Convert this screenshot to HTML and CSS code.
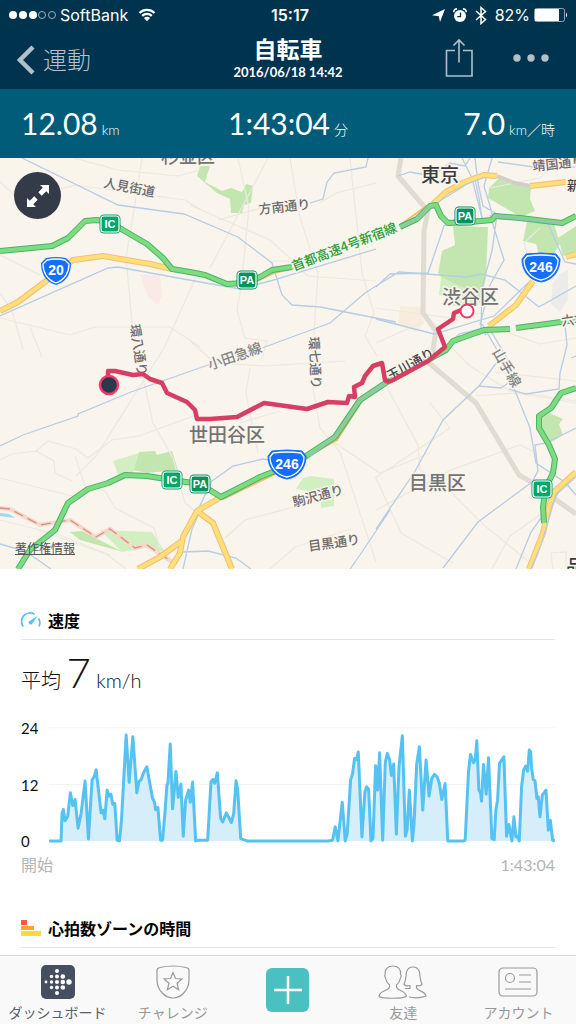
FILE: index.html
```html
<!DOCTYPE html>
<html lang="ja">
<head>
    <meta charset="UTF-8">
    <meta name="viewport" content="width=device-width, initial-scale=1.0">
    <title>自転車</title>
    <link rel="stylesheet" href="styles.css">
</head>
<body>
    <header>
        <div class="status-bar">
            <div class="status-left">
                <svg width="48" height="10" viewBox="0 0 48 10">
                    <g fill="#fff"><circle cx="5" cy="5" r="4"/><circle cx="15" cy="5" r="4"/><circle cx="25" cy="5" r="4"/></g>
                    <g fill="none" stroke="#9fb0bc"><circle cx="34" cy="5" r="3.5"/><circle cx="44" cy="5" r="3.5"/></g>
                </svg>
                <span class="carrier">SoftBank</span>
                <svg width="18" height="14" viewBox="0 0 18 14">
                    <path d="M1.500 5a10.600 10.600 0 0 1 15 0M4.200 7.900a6.800 6.800 0 0 1 9.600 0" fill="none" stroke="#fff" stroke-width="2.200"/>
                    <path d="M9 13.300 5.900 10.100a4.400 4.400 0 0 1 6.200 0z" fill="#fff"/>
                </svg>
            </div>
            <span class="clock">15:17</span>
            <div class="status-right">
                <svg width="13" height="13" viewBox="0 0 13 13"><path d="M13 0 8 13 6.800 7.200 0 6.200z" fill="#fff"/></svg>
                <svg width="14" height="15" viewBox="0 0 14 15">
                    <circle cx="7" cy="8" r="6" fill="#fff"/>
                    <path d="M.8 4.200A3 3 0 0 1 4 .9M13.200 4.200A3 3 0 0 0 10 .9" fill="none" stroke="#fff" stroke-width="1.600"/>
                    <path d="M7.500 4.500V8.700H4.200" fill="none" stroke="#00334e" stroke-width="1.300"/>
                </svg>
                <svg width="12" height="19" viewBox="0 0 12 19"><path d="M1 5l9.500 8.500L6 17.500v-16L10.500 5.500 1 14" fill="none" stroke="#fff" stroke-width="1.500"/></svg>
                <span class="battery-level">82%</span>
                <svg width="34" height="14" viewBox="0 0 34 14">
                    <rect x=".5" y=".5" width="30" height="13" rx="2" fill="none" stroke="#8fa4b1"/>
                    <path d="M1 1h24v12H1z" fill="#fff"/>
                    <path d="M32 4.500q2 2.500 0 5z" fill="#fff"/>
                </svg>
            </div>
        </div>

        <nav class="nav-bar">
            <a class="back" href="#exercise">
                <svg width="18" height="30" viewBox="0 0 18 30"><path d="M16 2 3 15l13 13" fill="none" stroke="currentColor" stroke-width="4.500"/></svg>
                <span>運動</span>
            </a>
            <div class="nav-title">
                <h1>自転車</h1>
                <time datetime="2016-06-18T14:42">2016/06/18 14:42</time>
            </div>
            <div class="nav-actions">
                <button type="button" aria-label="共有">
                    <svg width="28" height="39" viewBox="0 0 28 39"><path d="M10 12.500H1.500v25.500h25.500V12.500H18M14 24.500V2M8.500 7.500 14 2l5.500 5.500" fill="none" stroke="currentColor" stroke-width="1.600"/></svg>
                </button>
                <button type="button" aria-label="その他">
                    <svg width="36" height="8" viewBox="0 0 36 8"><g fill="currentColor"><circle cx="4" cy="4" r="3.700"/><circle cx="18" cy="4" r="3.700"/><circle cx="32" cy="4" r="3.700"/></g></svg>
                </button>
            </div>
        </nav>
    </header>

    <div class="stats">
        <div class="stat">12.08<small>km</small></div>
        <div class="stat">1:43:04<small>分</small></div>
        <div class="stat">7.0<small>km／時</small></div>
    </div>

    <main>
        <div class="map">
            <svg class="map-canvas" viewBox="0 0 576 411" role="img" aria-label="ルート地図">
                <defs>
                    <g id="ic">
                        <rect x="-10.500" y="-9.500" width="21" height="19" rx="4.500" fill="#00a66a"/>
                        <rect x="-9" y="-8" width="18" height="16" rx="3" fill="none" stroke="#fff" stroke-width="1.200"/>
                        <text class="badge-text" y="4">IC</text>
                    </g>
                    <g id="pa">
                        <rect x="-10.500" y="-9.500" width="21" height="19" rx="4.500" fill="#00935c"/>
                        <rect x="-9" y="-8" width="18" height="16" rx="3" fill="none" stroke="#fff" stroke-width="1.200"/>
                        <text class="badge-text" y="4">PA</text>
                    </g>
                    <g id="route246">
                        <path d="M-15-14Q0-16 15-14L19-9C19 2 13 12 0 14-13 12-19 2-19-9z" fill="#146eff" stroke="#146eff" stroke-linejoin="round"/>
                        <path d="M-14-12Q0-14 14-12L17-8C17 1 11 10 0 12-11 10-17 1-17-8z" fill="none" stroke="#fff" stroke-width="1.300"/>
                        <text class="shield-text" y="4">246</text>
                    </g>
                </defs>

                <rect width="576" height="411" fill="#f9f4ec"/>

                <!-- 公園 -->
                <g fill="#c3e6b1">
                    <path d="M200 8h10l-5 16 17 9 9-3 11 4 4-8 7 2-2 17-7 2-2 8-11 0-1-14-13-6-20-17z"/>
                    <path d="M499 20l32 9-1 12 5 12-14 6-33-19 1-10z"/>
                    <path d="M453 68l35 1-2 51-6 25-27-13-15-16 4-23 13-6z"/>
                    <path d="M527 64l27 2 6 20-6 10-13 8-5-18-13-3z"/>
                    <path d="M558 80l18-12v27l-13 3z"/>
                    <path d="M541 257l8-2 14 6-4 5 4 11-13 8-10-10z"/>
                    <path d="M139 294l16-1 2 4 15-4 6 19-31 3-14-3z"/>
                    <path d="M70 374l12-1 41 21-43-12z"/>
                </g>
                <g fill="#d2efc1">
                    <path d="M441 119l38 18-1 11h-24l-9-9-6-2z"/>
                    <path d="M113 303l26-8-6 20-15 2z"/>
                    <path d="M303 320l8-2 23 3 0 27-13 2-1-15-24-4z"/>
                    <path d="M100 372l52 2 13 20-20-4-23 4z"/>
                </g>
                <path d="M140 116l20 1 2 20-4 10-10-8z" fill="#fbe9e6"/>
                <path d="M400 148l20 1 4 16-8 9-18-9z" fill="#f8eddc"/>
                <path d="M560 116l8-4v30l-8 12-9-8 2-21z" fill="#ebebe9"/>
                <path d="M0 355l9 1 6 4-15-2z" fill="#9cdcf0"/>

                <!-- 細い道路 -->
                <g fill="none" stroke="#ece8e0" stroke-width="1.200">
                    <path d="M142 0l-7 45-9 55 6 64 4 12M74 0l44 12 60 6 22-6M0 24l20 18 55-15 110 15 15 9M0 97l40 20M0 135l12 18 11 38M0 160l70 17 25-8h75l30 20M30 169l12 30M200 110l-36 80-68 108-20 20M190 47l80 35 22 20"/>
                    <path d="M238 0l11 50-8 80-4 22 8 28 22 3-6 20M290 0l10 60 18 55-6 90M350 0l12 115 12 40-9 23 12 20M268 0l-58 110M218 62l65-18M376 25l-40 10-16 10M270 103h20l18 15 68 5M190 183l25 22 50 3 80-5"/>
                    <path d="M560 0l-20 20-50 10M376 82l48-30M376 150l75 10 30-5M376 185l45-20M540 70l-16 15 8 30M450 188l20 20 40 25 66 10M495 170l45 16 36-6"/>
                    <path d="M0 302l12-6 24-3 12-10 28 8 12 9 24-18 27-4 60-22M36 293l18 10 1 12 17 8M143 220l10 45 20 35 12 45 15 12M75 298l10 30 20 5 10 17 39 20 6 20M0 320l80 20M0 362l60 15 50 20M36 371l70 25 20 15M250 210l-4 25 12 60M312 225l8 45 20 24 36 110M335 285l45 30 50-20M225 380l20-18 60-16 40-10M270 411l25-22 56-18"/>
                    <path d="M383 222l35 65 2 25 25 16 40 40 42 34M576 223l-82-9M576 245l-60-10-40 3M376 352l75-40 69-25 13 6M430 245l20 25-75 50M376 320l25 55 52 30M550 350l-40 28-22 40M553 411l-2-16 15-1 0 17M240 265l40-12"/>
                </g>

                <!-- 鉄道 -->
                <path d="M401 0l-3 18 30 35-4 20-1 82 13 18-4 25-3 7 47 40 43 72 14 8 43 31" fill="none" stroke="#dfdcd1" stroke-width="5"/>
                <g fill="none" stroke="#b7cce5" stroke-width="1.300">
                    <path d="M22 0l96 47 66 9 54 23 34 26 10 32 10 10 28 2 76 15M0 158l108-48 10-1 82 15 40 7 30-8 106-32M262 190l68-25 35-30 11-7"/>
                    <path d="M368 0l-2 9-32 6-7 9-4 17-13 4M398 18l12-4 22 4 18-13 15 3 5-8M475 0l3 25 5 23 14 8-5 37-10 36-1 42 5 6M492 0l-8 28 6 20 3 12M462 0l10 20 10 40-3-20-5-23M498 4l36 5 42 0M474 50l-30 18-16 47-38 1-14 13M376 128l23-14 67 5 15-3 24 6 34 27 37-21M490 57l14 45-14 25-10 40M376 161l58 15 60-18 35-34M488 168l20 34M482 166l22 38M548 66l17 38 11 2M565 167l2 20-7 28-1 16-33 5-17-5M447 188l42-19-30 7z"/>
                    <path d="M0 288l23-11 55-19 0-2 53-22 120-42M191 366l21-43 21-15 30-7 11 2M183 411l9-40 8-18M0 386l25 7 26 18M183 394l25-1 28 7 15 11M576 198l-5 2M497 204l-18 24-36 34-29 53-30 44-8 12M479 228l22 2 10-7M512 225l10 25 8 20 6 35 30 20 10 12M576 270l-30 15-11 2 3 26-6 11-54 40-35 46M576 337l-12-14-8 16-25 35-15 37M390 352l-28 42-12 17"/>
                </g>
                <path d="M0 350l10 1 30 16 30-5 26 17 14-8 25 19 12-3 28 19" fill="none" stroke="#f7d6cc" stroke-width="4"/>
                <path d="M0 350l10 1 30 16 30-5 26 17 14-8 25 19 12-3 28 19" fill="none" stroke="#d9927f" stroke-width="1.300" stroke-dasharray="10 5"/>

                <!-- 国道 -->
                <path d="M0 153l18-9 32-24 23-18 30-4 47 8 22 5M433 46l13-12 19-10 19-7 13 1M530 28l36-4M576 96l-10 3M533 123l-17 24-27 21M576 314l-22 20-5 15-6 26-14 36M221 339l-24 14 16 12 19 46M197 353l-14 26-3 16-10 16M183 382l-23 17-22 12" fill="none" stroke="#f3be78" stroke-width="6" stroke-linejoin="round"/>
                <path d="M0 153l18-9 32-24 23-18 30-4 47 8 22 5M433 46l13-12 19-10 19-7 13 1M530 28l36-4M576 96l-10 3M533 123l-17 24-27 21M576 314l-22 20-5 15-6 26-14 36M221 339l-24 14 16 12 19 46M197 353l-14 26-3 16-10 16M183 382l-23 17-22 12" fill="none" stroke="#ffdf78" stroke-width="4" stroke-linejoin="round"/>
                <path d="M497 18l18 7 15 3" fill="none" stroke="#d3cfc7" stroke-width="4"/>
                <path d="M435 46l32-20 18-7M576 319l-20 18-15 50-10 24" fill="none" stroke="#b7cce5" stroke-width="1.300"/>
                <path d="M246 128l28-13 20-5M223 341l52-25 62-34 25-39 24-16M400 67l28-20" fill="none" stroke="#f5bd6c" stroke-width="2"/>

                <!-- 高速道路 -->
                <path d="M0 93l52-5 16-8 17-17 11-1 14 2 13 8 24 14 16 14 9 11 18 3 15 3 22 9 18-1 15-6 12-7 20-3M400 69l17-8 13-13 6-1 5 11 7 7 22-1 22-2 3-4 25 2 42 5 14-7M18 411l12-19 25-20 13-27 20-14 20-6 17-8 22 1 25 4 28 4 21 13 39-20 15-6 25-11 35-23 25-37 27-18 59-32 7-9 31-11 26-1M516 170l60-8M576 230l-15 5-10 15-12 8 0 12 10 17 6 14-2 14-7 14-3 20 1 16" fill="none" stroke="#48b56a" stroke-width="6" stroke-linejoin="round"/>
                <path d="M0 93l52-5 16-8 17-17 11-1 14 2 13 8 24 14 16 14 9 11 18 3 15 3 22 9 18-1 15-6 12-7 20-3M400 69l17-8 13-13 6-1 5 11 7 7 22-1 22-2 3-4 25 2 42 5 14-7M18 411l12-19 25-20 13-27 20-14 20-6 17-8 22 1 25 4 28 4 21 13 39-20 15-6 25-11 35-23 25-37 27-18 59-32 7-9 31-11 26-1M516 170l60-8M576 230l-15 5-10 15-12 8 0 12 10 17 6 14-2 14-7 14-3 20 1 16" fill="none" stroke="#7edb80" stroke-width="4" stroke-linejoin="round"/>
                <path d="M310 298l25-19 25-37 27-18M495 58l65 7M400 69l17-8 13-13" fill="none" stroke="#9bbfb5" stroke-width="1.800"/>

                <!-- 地名 -->
                <g class="place">
                    <text x="161" y="5" font-size="18">杉並区</text>
                    <text x="189" y="284" font-size="19">世田谷区</text>
                    <text x="409" y="332" font-size="19">目黒区</text>
                    <text x="442" y="146" font-size="19">渋谷区</text>
                    <text x="421" y="24" font-size="19" class="city">東京</text>
                    <text x="566" y="415" font-size="18" class="city">品</text>
                </g>
                <g class="road-name">
                    <text transform="translate(103 29) rotate(11)">人見街道</text>
                    <text transform="translate(259 56) rotate(-6)">方南通り</text>
                    <text transform="translate(210 212) rotate(-19)" class="rail-name">小田急線</text>
                    <text transform="translate(294 349) rotate(-15)">駒沢通り</text>
                    <text transform="translate(309 393) rotate(-8)">目黒通り</text>
                    <text transform="translate(533 13) rotate(-6)">靖国通り</text>
                    <text transform="translate(130 167) rotate(81)">環八通り</text>
                    <text transform="translate(309 179) rotate(87)">環七通り</text>
                    <text transform="translate(492 194) rotate(60)" class="rail-name">山手線</text>
                    <text transform="translate(562 168) rotate(-8)">六本木通り</text>
                    <text transform="translate(390 223) rotate(-29)" class="dark">玉川通り</text>
                    <text transform="translate(567 32)" class="dark">新宿通り</text>
                    <text transform="translate(294 113) rotate(-21)" class="highway-name">首都高速4号新宿線</text>
                </g>

                <use href="#ic" x="110" y="66"/>
                <use href="#ic" x="172" y="322"/>
                <use href="#ic" x="542" y="331"/>
                <use href="#pa" x="247" y="122"/>
                <use href="#pa" x="465" y="58"/>
                <use href="#pa" x="200" y="326"/>
                <g transform="translate(56 113)">
                    <path d="M-10-13Q0-15 10-13L15-8C15 2 11 11 0 14-11 11-15 2-15-8z" fill="#146eff"/>
                    <path d="M-9-11Q0-13 9-11L13-7C13 1 9 9 0 12-9 9-13 1-13-7z" fill="none" stroke="#fff" stroke-width="1.300"/>
                    <text class="shield-text" y="4">20</text>
                </g>
                <use href="#route246" x="541" y="110"/>
                <use href="#route246" x="287" y="307"/>

                <!-- 走行ルート -->
                <path d="M108 224v-11h7l18 4 10-1 7 5 12 4 5 10 20 9 8 8 2 9h13l27-2 27-14 43 6 21-7 19 1 2-7 6 1-1-10 8-4 3-7 8-10 9-3 3 17q2 3 8 0l35-19 17-14-7-18 15-10 1-6 12-5" fill="none" stroke="#d63f63" stroke-width="4.500" stroke-linejoin="round"/>
                <circle cx="109" cy="227" r="9" fill="#2b3a4b" stroke="#f0386b" stroke-width="2.500"/>
                <circle cx="467" cy="153" r="6.500" fill="#fff" stroke="#e93a69" stroke-width="2"/>
            </svg>

            <button type="button" class="expand" aria-label="地図を拡大">
                <svg width="24" height="24" viewBox="0 0 24 24">
                    <path d="M14 1h9v9l-2.800-2.800-4.500 4.500-3.400-3.400 4.500-4.500zM10 23H1v-9l2.800 2.800 4.500-4.500 3.400 3.400-4.500 4.500z" fill="#fff"/>
                </svg>
            </button>
            <a class="copyright" href="#copyright">著作権情報</a>
        </div>

        <section class="card">
            <h2>
                <svg width="20" height="16" viewBox="0 0 20 16">
                    <path d="M2.200 14.500A8.500 8.500 0 0 1 13.500 2.200M17.600 6.500a8.500 8.500 0 0 1 .4 8" fill="none" stroke="#56c2f2" stroke-width="1.700"/>
                    <path d="M16.800 3.800 11 12a2 2 0 0 1-3-2.600z" fill="#56c2f2"/>
                </svg>
                速度
            </h2>
            <p class="average">平均 <strong>7</strong> km/h</p>

            <div class="chart">
                <div class="y-axis"><span>24</span><span>12</span><span>0</span></div>
                <svg class="plot" viewBox="0 0 1515 360">
                    <path d="M0 8H1515M0 178H1515" stroke="#f4f4f4" stroke-width="3"/>
                    <path class="speed" d="M0 347H36L39 265 43 253 48 287 56 273 64 203 71 241 78 223 87 309 96 265 108 168 118 341 129 165 136 153 141 134 156 263 162 255 167 281 174 195 180 213 185 207 191 237 197 235 204 345 211 347 217 285 231 30 240 172 251 35 263 203 269 170 276 163 283 143 293 125 310 220 316 231 319 253 326 247 334 345 340 345 347 265 353 180 356 175 363 57 370 251 380 139 387 217 395 177 402 333 409 225 418 195 423 231 430 171 439 347 447 345 475 345 485 170 491 163 496 175 504 143 514 280 520 290 531 263 546 292 553 265 560 167 565 195 574 340 593 347H836L849 345 857 305 865 347 878 231 887 347 893 325 903 165 909 145 915 100 921 103 926 81 937 335 946 200 951 185 957 193 964 347 970 340 978 122 984 195 990 83 999 345 1007 110 1013 85 1020 105 1025 151 1032 117 1040 327 1048 125 1058 32 1067 333 1072 315 1079 195 1088 347 1093 295 1101 115 1109 65 1119 255 1129 105 1138 213 1146 160 1154 148 1162 155 1169 175 1176 223 1186 175 1194 347 1240 347 1246 345 1256 140 1262 88 1271 113 1276 105 1281 47 1287 195 1292 203 1295 228 1301 118 1309 207 1316 98 1326 340 1333 343 1338 253 1343 225 1349 115 1362 95 1370 333 1377 298 1386 347 1392 275 1398 335 1403 333 1408 347 1415 185 1421 135 1427 123 1433 138 1438 75 1442 80 1445 130 1450 163 1455 167 1461 220 1465 215 1470 275 1477 210 1488 195 1495 315 1501 285 1508 345 1515 347"/>
                </svg>
            </div>
            <div class="x-axis"><span>開始</span><span>1:43:04</span></div>
        </section>

        <section class="card">
            <h2>
                <svg width="20" height="16" viewBox="0 0 20 16">
                    <path d="M0 0h6v5H0z" fill="#ff5a3c"/>
                    <path d="M0 6h13v4H0z" fill="#ffa32e"/>
                    <path d="M0 11h20v5H0z" fill="#ffd93b"/>
                </svg>
                心拍数ゾーンの時間
            </h2>
        </section>
    </main>

    <nav class="tab-bar">
        <a class="active" href="#dashboard">
            <svg width="34" height="34" viewBox="0 0 34 34">
                <rect width="34" height="34" rx="5" fill="#454f60"/>
                <g fill="#fff">
                    <circle cx="5" cy="17" r="1.400"/>
                    <circle cx="10.500" cy="11.500" r="1.700"/><circle cx="10.500" cy="17" r="1.700"/><circle cx="10.500" cy="22.500" r="1.700"/>
                    <circle cx="16" cy="6" r="2"/><circle cx="16" cy="11.500" r="2"/><circle cx="16" cy="17" r="2"/><circle cx="16" cy="22.500" r="2"/><circle cx="16" cy="28" r="2"/>
                    <circle cx="21.800" cy="11.500" r="2.300"/><circle cx="21.800" cy="17" r="2.300"/><circle cx="21.800" cy="22.500" r="2.300"/>
                    <circle cx="28" cy="17" r="2.700"/>
                </g>
            </svg>
            <span>ダッシュボード</span>
        </a>
        <a href="#challenge">
            <svg width="34" height="34" viewBox="0 0 34 34" fill="none" stroke="currentColor" stroke-width="1.200">
                <path d="M1 5Q1 3 4 2.500Q17-.5 30 2.500Q33 3 33 5V15C33 25 25 33 17 33S1 25 1 15z"/>
                <path d="M17 7.500l2.500 6 6.500.5-5 4.200 1.600 6.500L17 21.200l-5.600 3.500 1.600-6.500-5-4.200 6.500-.5z"/>
            </svg>
            <span>チャレンジ</span>
        </a>
        <button type="button" class="add" aria-label="追加">
            <svg width="30" height="30" viewBox="0 0 30 30"><path d="M15 1v28M1 15h28" stroke="#fff" stroke-width="2.500"/></svg>
        </button>
        <a href="#friends">
            <svg width="50" height="34" viewBox="0 0 50 34" fill="none" stroke="currentColor" stroke-width="1.200" stroke-linejoin="round">
                <path d="M1 31C2 25 11 26 11.500 22V20C9 18 8 16 7.500 13Q6 11 7.200 9C6.500 4 10 1 15 1S23 4 22.500 9Q24 11 22.500 13C22 16 21 18 18.500 20V22C19 26 27 25 28.500 31C27 34 2 34 1 31z"/>
                <path d="M31 32q9 2 17-1C47 26 39.500 26 38.500 23V20.500q3 1 5.500-1C42 15 42 11 41.500 7Q40 2 35 2T28.500 7C28 11 28 15 26 19.500q2 2 6 1v3h-5"/>
            </svg>
            <span>友達</span>
        </a>
        <a href="#account">
            <svg width="40" height="34" viewBox="0 0 40 34" fill="none" stroke="currentColor" stroke-width="1.200">
                <rect x="1" y="3" width="38" height="28" rx="4"/>
                <circle cx="12" cy="13" r="4.500"/>
                <path d="M21 10h12M21 17h12M7 24h26"/>
            </svg>
            <span>アカウント</span>
        </a>
    </nav>
</body>
</html>
```

FILE: styles.css
```css
/* 基本スタイル */
* {
    box-sizing: border-box;
}
body {
    display: flex;
    flex-direction: column;
    height: 100vh;
    margin: 0;
    background-color: #fff;
    color: #111;
    font-family: Lato, "Noto Sans CJK JP", sans-serif;
}
a {
    color: inherit;
    text-decoration: none;
}
button {
    padding: 0;
    border: none;
    background: none;
    color: inherit;
    cursor: pointer;
}
svg {
    display: block;
    flex: none;
}

/* ヘッダー */
header {
    flex: none;
    background-color: #00334e;
    color: #fff;
}
.status-bar {
    display: grid;
    grid-template-columns: 1fr auto 1fr;
    align-items: center;
    height: 30px;
    padding: 0 8px;
    font-family: Inter, sans-serif;
    font-size: 16px;
}
.status-left,
.status-right {
    display: flex;
    align-items: center;
}
.status-left {
    gap: 4px;
}
.carrier {
    margin-right: 6px;
}
.clock {
    padding-left: 4px;
    font-weight: 600;
}
.status-right {
    justify-content: flex-end;
    gap: 8px;
}
.battery-level {
    margin-right: -4px;
}
.nav-bar {
    display: grid;
    grid-template-columns: 1fr auto 1fr;
    align-items: center;
    height: 59px;
    padding: 0 17px;
}
.back {
    display: flex;
    align-items: center;
    gap: 8px;
    color: #b2c0c9;
    font-size: 24px;
    font-weight: 300;
    line-height: 30px;
}
.nav-title {
    padding-bottom: 3px;
    text-align: center;
}
.nav-title h1 {
    margin: 0;
    font-size: 23px;
    font-weight: 700;
    line-height: 28px;
}
.nav-title time {
    display: block;
    font-size: 13px;
    font-weight: 700;
    line-height: 18px;
}
.nav-actions {
    display: flex;
    justify-content: flex-end;
    align-items: center;
    gap: 40px;
    padding: 0 10px 4px 0;
    color: #b2c0c9;
}

/* 距離・時間・速度 */
.stats {
    display: grid;
    grid-template-columns: 1fr auto 1fr;
    flex: none;
    align-items: center;
    height: 69px;
    padding: 5px 21px 0;
    background-color: #005c78;
    color: #fff;
}
.stat {
    font-size: 30px;
    line-height: 40px;
    white-space: nowrap;
}
.stat:last-child {
    text-align: right;
}
.stat small {
    margin-left: 4px;
    font-size: 14px;
    font-weight: 300;
}

main {
    flex: 1;
    min-height: 0;
    overflow-y: auto;
    scrollbar-width: none;
}

/* 地図 */
.map {
    position: relative;
}
.map-canvas {
    width: 100%;
    height: auto;
    font-family: "Noto Sans CJK JP", sans-serif;
}
.map-canvas text {
    paint-order: stroke;
    stroke-linejoin: round;
}
.place text {
    fill: #737373;
    stroke: #f9f4ec;
    stroke-width: 3px;
    font-weight: 500;
}
.place .city {
    fill: #3c3c3c;
}
.road-name text {
    fill: #6b6b6b;
    stroke: #f9f4ec;
    stroke-width: 3px;
    font-size: 13px;
    font-weight: 500;
}
.road-name .rail-name {
    fill: #858585;
    font-size: 14px;
}
.road-name .dark {
    fill: #444;
}
.road-name .highway-name {
    fill: #2e9e3a;
}
.badge-text {
    fill: #fff;
    font-family: "Liberation Sans", sans-serif;
    font-size: 11px;
    font-weight: 700;
    text-anchor: middle;
}
.shield-text {
    fill: #fff;
    font-family: "Liberation Sans", sans-serif;
    font-size: 14px;
    font-weight: 700;
    text-anchor: middle;
}
.expand {
    position: absolute;
    top: 14px;
    left: 14px;
    display: flex;
    justify-content: center;
    align-items: center;
    width: 47px;
    height: 47px;
    border-radius: 50%;
    background-color: #333b49;
}
.copyright {
    position: absolute;
    bottom: 11px;
    left: 15px;
    color: #555;
    font-size: 12px;
    line-height: 18px;
    text-decoration: underline;
}

/* カード */
.card {
    padding: 32px 21px 0;
}
.card h2 {
    display: flex;
    align-items: center;
    gap: 7px;
    height: 39px;
    margin: 0;
    border-bottom: 1px solid #e4e4e4;
    color: #000;
    font-size: 16px;
    font-weight: 700;
}
.average {
    margin: 8px 0 16px;
    font-size: 20px;
    font-weight: 300;
    line-height: 48px;
}
.average strong {
    font-size: 42px;
    font-weight: 300;
}
.chart {
    display: flex;
}
.y-axis {
    display: flex;
    flex-direction: column;
    justify-content: space-between;
    width: 28px;
    font-size: 15px;
    line-height: 16px;
}
.plot {
    flex: 1;
    min-width: 0;
    padding: 5px 0 4px;
}
.speed {
    fill: #d6eef9;
    stroke: #56c2f2;
    stroke-width: 9;
    stroke-linejoin: round;
}
.x-axis {
    display: flex;
    justify-content: space-between;
    margin-top: 4px;
    color: #b4b4b4;
    font-size: 16px;
    font-weight: 400;
    line-height: 24px;
}

/* タブバー */
.tab-bar {
    display: grid;
    grid-template-columns: repeat(5, 1fr);
    flex: none;
    height: 69px;
    border-top: 1px solid #d8d8d8;
    background-color: #f9f9f9;
    color: #999;
    font-size: 14px;
}
.tab-bar a {
    display: flex;
    flex-direction: column;
    align-items: center;
    gap: 4px;
    padding-top: 9px;
    line-height: 20px;
    white-space: nowrap;
}
.tab-bar .active {
    color: #566070;
}
.add {
    display: flex;
    justify-content: center;
    align-items: center;
    place-self: center;
    width: 43px;
    height: 44px;
    border-radius: 6px;
    background-color: #4bc0c0;
}
```
